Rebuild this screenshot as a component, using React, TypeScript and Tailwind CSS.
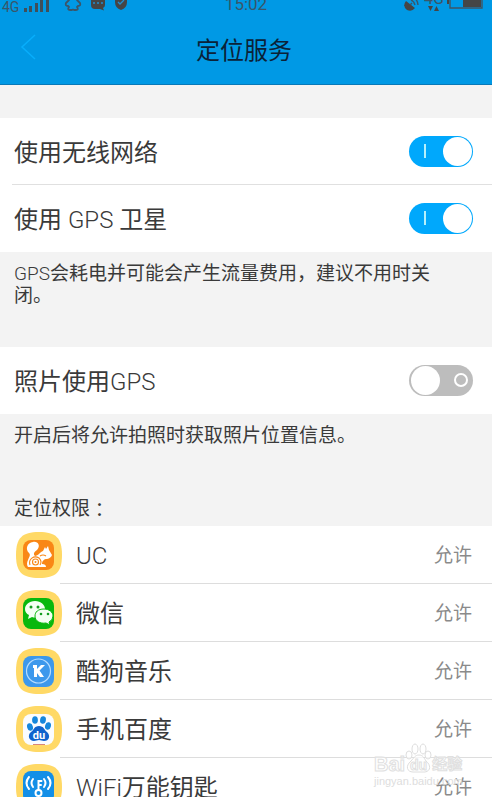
import { useState, type ReactNode } from "react";

function StatusBar() {
  return (
    <div className="grid h-[14px] grid-cols-[1fr_auto_1fr] grid-rows-[14px] items-end overflow-hidden text-[#3a566a]">
      <div className="flex items-end pl-[2px]">
        <span className="text-[14px] leading-[14px]">4G</span>
        <svg className="ml-1 h-[14px] w-[27px]" viewBox="0 0 27 14" fill="#3f4f5a" aria-hidden="true">
          <rect x="1" y="8" width="3" height="4" />
          <rect x="6" y="6" width="3" height="6" />
          <rect x="12" y="3" width="3" height="9" />
          <rect x="17" y="0" width="3" height="12" />
          <rect x="23" y="0" width="3" height="12" />
        </svg>
        <svg className="ml-[14px] h-[14px] w-[18px]" viewBox="0 0 18 14" fill="none" stroke="#3a566a" strokeWidth="1.8" strokeLinejoin="round" aria-hidden="true">
          <path d="M5-3V0L2 3Q1 6 4 6L5 7Q3 10 6 10H8L9 9.500 10 10H12Q15 10 13 7L14 6Q17 6 16 3L13 0V-3" />
        </svg>
        <svg className="ml-2 h-[14px] w-[16px]" viewBox="0 0 16 14" aria-hidden="true">
          <path fill="#454545" d="M1-2H15V5Q15 7 13 8L14 10.500 10 9H5Q1 9 1 5Z" />
          <path stroke="#238fd0" strokeWidth="1.500" d="M3 3h2M7 3h2M11 3h2" />
        </svg>
        <svg className="ml-2 h-[14px] w-[14px]" viewBox="0 0 14 14" aria-hidden="true">
          <path fill="#454545" d="M1-2H13V2Q13 8 7 10Q1 8 1 2Z" />
          <path fill="none" stroke="#238fd0" strokeWidth="1.3" d="m4 2 2 2 4-4" />
        </svg>
      </div>
      <time className="pb-px text-[17px] leading-[17px]">15:02</time>
      <div className="flex items-end justify-end pr-[9px]">
        <svg className="h-[14px] w-[16px]" viewBox="0 0 16 14" aria-hidden="true">
          <path fill="#454545" d="M3 1 12 8Q9 12 4 10Q-1 6 3 1Z" />
          <path fill="none" stroke="#3a566a" strokeWidth="1.4" d="m7 5 2-2M8 0q3 1 4 5M10-3q5 3 5 8" />
        </svg>
        <div className="ml-[5px] flex w-5 flex-col items-center pb-[3px]">
          <span className="text-[16px] leading-[14px]">4G</span>
          <svg className="h-[5px] w-3" viewBox="0 0 12 5" fill="#454545" aria-hidden="true">
            <path d="M0 0h5L2.500 5zM6 5h5L8.500 0z" />
          </svg>
        </div>
        <svg className="ml-[3px] h-[14px] w-[36px]" viewBox="0 0 36 14" aria-hidden="true">
          <path fill="#454545" d="M0 0h2v4H0zM16 0h18v7H16z" />
          <path fill="none" stroke="#3f5666" strokeWidth="1.4" d="M3-3V8H35V-3" />
        </svg>
      </div>
    </div>
  );
}

function MixedText({ text }: { text: string }) {
  return (
    <>
      {text.split(/([A-Za-z]+)/).map((part, i) =>
        i % 2 === 1 ? <span key={i} className="font-light">{part}</span> : part,
      )}
    </>
  );
}

function Toggle({ id, initial }: { id: string; initial: boolean }) {
  const [on, setOn] = useState(initial);
  return (
    <span className="relative block h-[31px] w-16 shrink-0">
      <input
        id={id}
        type="checkbox"
        role="switch"
        checked={on}
        onChange={() => setOn(!on)}
        className="block h-full w-full cursor-pointer appearance-none rounded-full bg-[#bdbdbd] checked:bg-[#00a8fc]"
      />
      <span
        className={
          on
            ? "pointer-events-none absolute top-px right-px size-[29px] rounded-full bg-white"
            : "pointer-events-none absolute top-px left-[2px] size-[29px] rounded-full bg-white"
        }
      />
      {on ? (
        <span className="pointer-events-none absolute top-2 left-[15px] h-[14px] w-[2px] bg-[#b5f0fb]" />
      ) : (
        <span className="pointer-events-none absolute top-2 right-[5px] size-[14px] rounded-full border-2 border-white" />
      )}
    </span>
  );
}

function SettingRow({ id, label, initial }: { id: string; label: string; initial: boolean }) {
  return (
    <div className="flex h-[67px] items-center justify-between bg-white pr-[19px] pl-[14px]">
      <label htmlFor={id} className="pt-[3px] text-2xl"><MixedText text={label} /></label>
      <Toggle id={id} initial={initial} />
    </div>
  );
}

function IconTile({ children }: { children: ReactNode }) {
  return (
    <svg className="size-[46px] shrink-0" viewBox="0 0 46 46" aria-hidden="true">
      <path fill="#ffd966" d="M23 0C40 0 46 6 46 23S40 46 23 46 0 40 0 23 6 0 23 0Z" />
      {children}
    </svg>
  );
}

const ucIcon = (
  <IconTile>
    <rect x="7" y="8" width="31" height="30" rx="8" fill="#f98716" />
    <path fill="#fff" d="M17 10C11 11 9 17 13 21C15 23 13 25 12 28Q10 32 12 35H30Q30 32 26 32C26 29 28 27 31 27Q35 26 36 23L33 18 32 14 30 17 29 15 27 19C24 20 22 24 19 24C17 22 18 20 21 18C25 14 22 9 17 10Z" />
    <path fill="none" stroke="#f98716" strokeWidth="1.1" d="M14 33C12 27 18 23 23 26C25 28 26 30 24 33M24 24q3-2 6 0" />
    <circle cx="19.500" cy="30" r="3" fill="#fff" stroke="#f98716" strokeWidth="1.100" />
    <circle cx="19.500" cy="30" r="1" fill="#f98716" />
  </IconTile>
);

const wechatIcon = (
  <IconTile>
    <rect x="7" y="8" width="31" height="31" rx="8" fill="#09b80d" />
    <path fill="#f4fff2" d="M19 11C13 11 9 15 9 19Q9 23 13 25L12 29 16 27Q19 28 22 27C28 26 29 22 29 19C29 15 25 11 19 11Z" />
    <path fill="#f4fff2" stroke="#09b80d" strokeWidth="1" d="M28 19C22 19 19 22 19 26C19 31 24 34 30 33L34 35 33 32Q37 30 37 26C37 22 33 19 28 19Z" />
    <g fill="#159d20"><circle cx="15" cy="17" r="1.5" /><circle cx="22" cy="17" r="1.5" /><circle cx="25" cy="24" r="1.3" /><circle cx="32" cy="24" r="1.3" /></g>
  </IconTile>
);

const kugouIcon = (
  <IconTile>
    <rect x="7" y="8" width="31" height="31" rx="8" fill="#3c98ec" />
    <circle cx="22.500" cy="23" r="12" fill="none" stroke="#b5dcff" strokeWidth="1.2" />
    <path fill="#fff" d="M17 17H21V21L25 17H29L23.500 22.500 28 29H24L21 25V29H18V20H17Z" />
  </IconTile>
);

const baiduIcon = (
  <IconTile>
    <rect x="7" y="8" width="31" height="31" rx="8" fill="#fafcff" />
    <g fill="#1687dc">
      <ellipse cx="14" cy="21" rx="2.9" ry="3.8" transform="rotate(-15 14 21)" />
      <ellipse cx="19" cy="14" rx="2.9" ry="3.8" />
      <ellipse cx="27" cy="14" rx="2.9" ry="3.8" transform="rotate(10 27 14)" />
      <ellipse cx="32" cy="20" rx="2.9" ry="3.8" transform="rotate(15 32 20)" />
    </g>
    <path fill="#1163cd" d="M23 20C18 20 18 24 15 26C11 29 13 35 18 35L23 34 28 35C33 35 35 30 31 26C28 24 28 20 23 20Z" />
    <text x="23" y="33" textAnchor="middle" fill="#fff" className="font-['Roboto',sans-serif] text-[11px] font-bold">du</text>
    <path stroke="#d8867c" strokeWidth="1" d="M17 38.500h12" />
  </IconTile>
);

const wifiIcon = (
  <IconTile>
    <rect x="7" y="7" width="31" height="32" rx="8" fill="#138fe7" />
    <g fill="none" stroke="#fff" strokeWidth="2" strokeLinecap="round">
      <path d="M17 15q-3 4 0 8M13 13q-5 6 0 12M28 15q3 4 0 8M32 13q5 6 0 12M22.500 26V17h3M23 21h2" />
      <circle cx="22.500" cy="29" r="3" />
    </g>
  </IconTile>
);

const apps = [
  { name: "UC", icon: ucIcon },
  { name: "微信", icon: wechatIcon },
  { name: "酷狗音乐", icon: kugouIcon },
  { name: "手机百度", icon: baiduIcon },
  { name: "WiFi万能钥匙", icon: wifiIcon },
];

function Watermark() {
  return (
    <div className="pointer-events-none absolute right-[28px] bottom-[9px] w-[90px] text-white/60" aria-hidden="true">
      <div className="flex h-[31px] items-end font-['Liberation_Sans','Noto_Sans_CJK_SC',sans-serif] font-bold [-webkit-text-stroke:1px_#e0e0e0]">
        <span className="text-[20px] leading-[20px]">Bai</span>
        <span className="relative flex h-[31px] w-[27px] shrink-0 items-end justify-center">
          <svg className="absolute inset-0 h-[31px] w-[27px]" viewBox="0 0 27 31" fill="#ffffffaa" stroke="#dedede">
            <ellipse cx="4" cy="12" rx="3" ry="4" />
            <ellipse cx="10" cy="6" rx="3" ry="5" />
            <ellipse cx="18" cy="6" rx="3" ry="5" />
            <ellipse cx="23" cy="12" rx="3" ry="4" />
            <path d="M14 12C10 12 9 15 6 18C0 23 2 29 8 29H20C26 28 26 22 21 18C19 15 18 12 14 12Z" />
          </svg>
          <span className="relative text-[14px] leading-[18px]">du</span>
        </span>
        <span className="text-[15px] leading-[20px] whitespace-nowrap">经验</span>
      </div>
      <div className="font-['Liberation_Sans',sans-serif] text-[11px] leading-[14px] font-normal text-[#dddddd]">jingyan.baidu.com</div>
    </div>
  );
}

export default function App() {
  return (
    <div className="relative h-screen overflow-hidden bg-[#f3f3f3] font-['Roboto','Noto_Sans_CJK_SC',sans-serif] text-[#3a3a3a]">
      <div className="h-full overflow-y-auto [scrollbar-width:none]">
        <header className="h-[85px] border-b border-[#0879b8] bg-[#0099e5]">
          <StatusBar />
          <div className="grid h-[70px] grid-cols-[1fr_auto_1fr] items-center pr-1">
            <button type="button" aria-label="返回" className="ml-5 flex h-12 w-10 items-center">
              <svg className="mb-1 h-[26px] w-4" viewBox="0 0 16 26" fill="none" stroke="#08aefb" strokeWidth="1.500" aria-hidden="true">
                <path d="M15 1 2 13 15 25" />
              </svg>
            </button>
            <h1 className="pt-[3px] text-2xl text-[#0b2238]">定位服务</h1>
          </div>
        </header>

        <main>
          <section className="pt-[33px]">
            <SettingRow id="wifi" label="使用无线网络" initial={true} />
            <div className="bg-white pl-3"><div className="-mt-px h-px bg-[#e0e0e0]" /></div>
            <SettingRow id="gps" label="使用 GPS 卫星" initial={true} />
            <p className="pt-[11px] pr-9 pb-10 pl-[14px] text-[19px] leading-[22px]">
              <MixedText text="GPS会耗电并可能会产生流量费用，建议不用时关闭。" />
            </p>
          </section>

          <section>
            <SettingRow id="photo" label="照片使用GPS" initial={false} />
            <p className="pt-[11px] pr-9 pl-[14px] text-[19px] leading-[22px]">开启后将允许拍照时获取照片位置信息。</p>
          </section>

          <section className="pt-[51px]">
            <h2 className="mb-[6px] flex h-[22px] items-center px-[14px] text-[19px] leading-[22px]">
              定位权限<span className="font-['Noto_Sans_CJK_TC',sans-serif]">：</span>
            </h2>
            <ul className="bg-white">
              {apps.map((app) => (
                <li key={app.name}>
                  <button type="button" className="flex h-[57px] w-full items-center pr-5 pl-4 text-left">
                    {app.icon}
                    <span className="ml-[14px] flex-1 pt-[2px] text-2xl"><MixedText text={app.name} /></span>
                    <span className="pt-1 text-[19px] text-[#8a8a8a]">允许</span>
                  </button>
                  <div className="ml-[60px] h-px bg-[#dddddd]" />
                </li>
              ))}
            </ul>
          </section>
        </main>
      </div>
      <Watermark />
    </div>
  );
}
